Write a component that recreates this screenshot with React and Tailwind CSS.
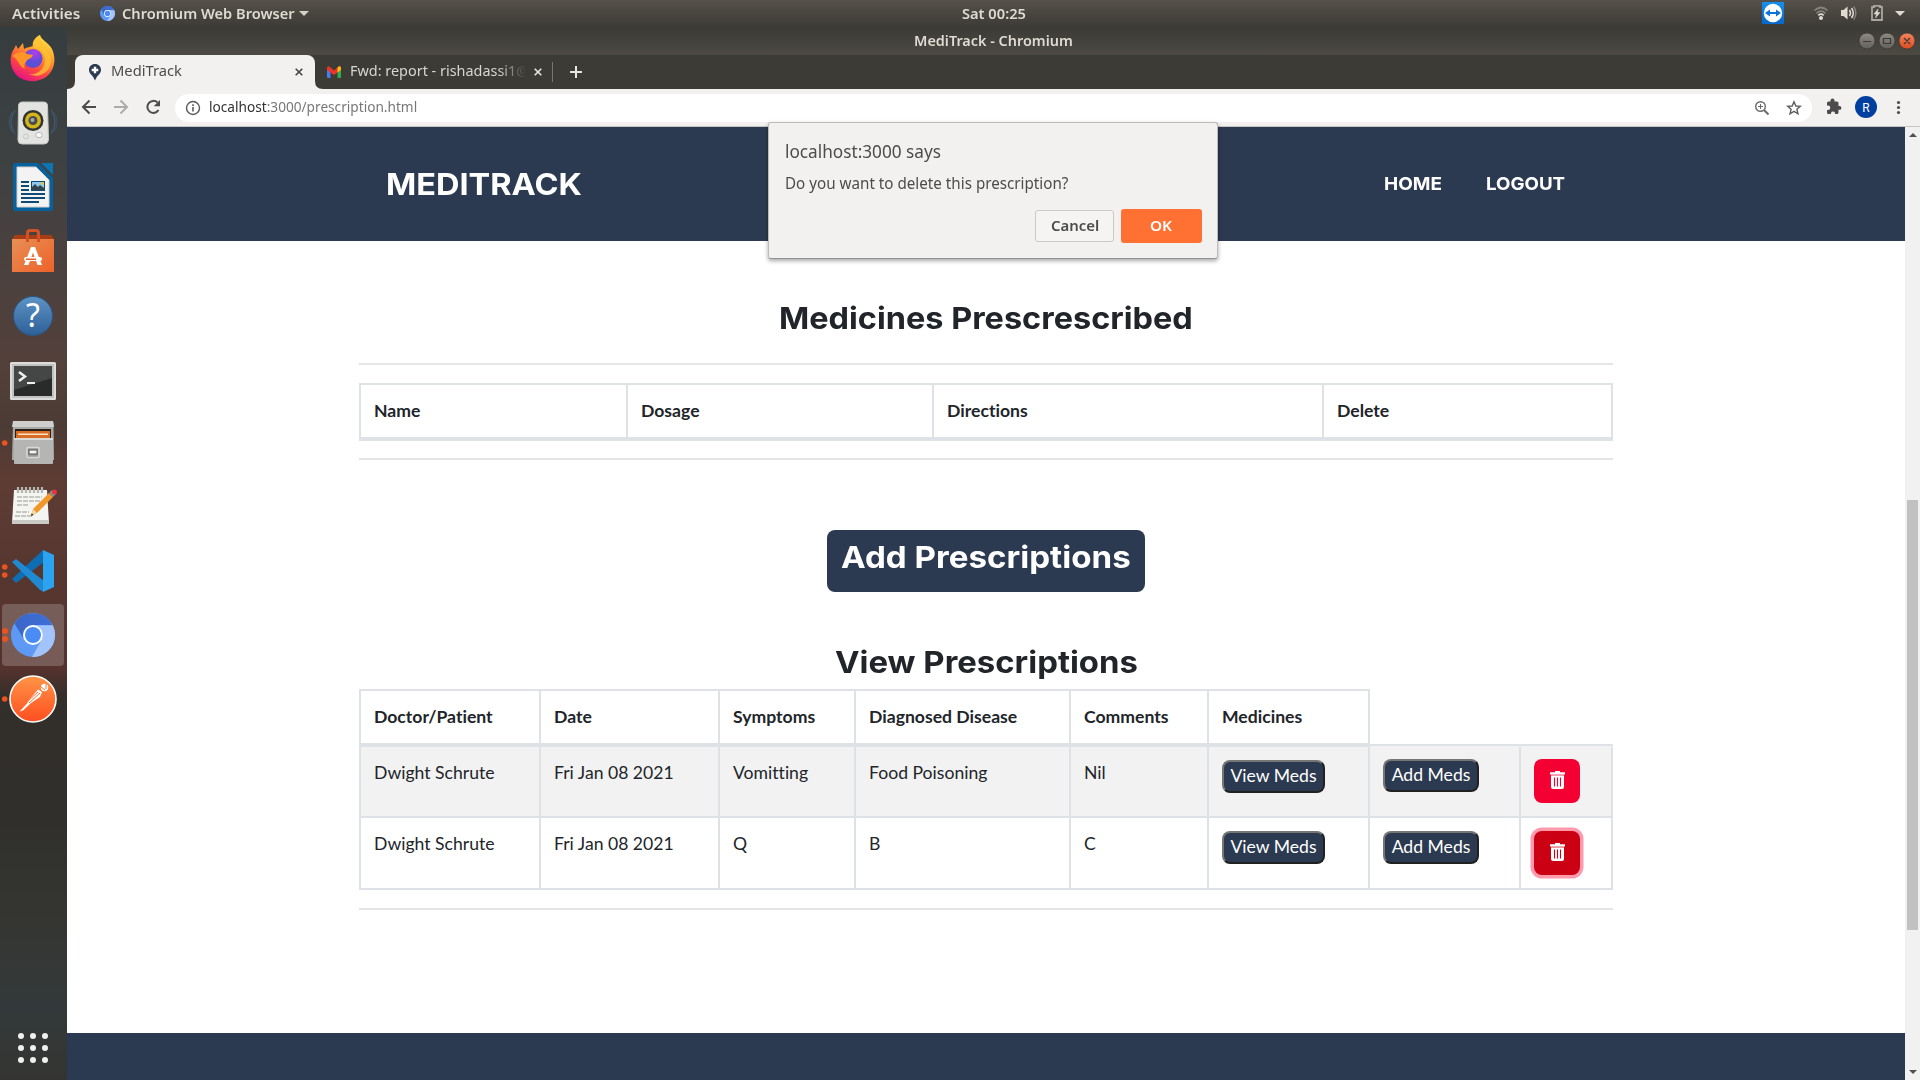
import React, { useLayoutEffect, useRef, useState } from "react";

/* Text set to an exact advance width by horizontal scaling. */
function Fit({ w, className = "", children }) {
  const ref = useRef(null);
  const [k, setK] = useState(1);
  useLayoutEffect(() => {
    const n = ref.current.offsetWidth;
    if (n) setK(w / n);
  }, [w]);
  return (
    <span className={"block shrink-0 whitespace-nowrap text-left " + className} style={{ width: w }}>
      <span ref={ref} className="inline-block origin-left" style={{ transform: `scaleX(${k})` }}>
        {children}
      </span>
    </span>
  );
}

function ChromiumLogo({ className }) {
  return (
    <svg className={className} viewBox="-22 -22 44 44">
      <defs>
        <linearGradient id="crTop" x1="0" x2="1"><stop offset="0" stopColor="#3a66c8" /><stop offset="1" stopColor="#3f6fd6" /></linearGradient>
      </defs>
      <circle r="22" fill="#5f99f6" />
      <path d="M-18.6 -11.5A22 22 0 0 1 19.7 -9.8L0 -9.8A9.8 9.8 0 0 0 -8.6 5Z" fill="url(#crTop)" />
      <path d="M19.7 -9.8A22 22 0 0 1 -1 22L8.6 5A9.8 9.8 0 0 0 0 -9.8Z" fill="#a3c4fb" />
      <circle r="10" fill="#fff" />
      <circle r="8" fill="#4a8bf5" />
    </svg>
  );
}

function Slot({ y, children, dots = [] }) {
  return (
    <svg className="block h-16 w-[67px] shrink-0" viewBox={`0 ${y} 67 64`}>
      {children}
      {dots.map((d) => <circle key={d} cx="4.7" cy={d} r="2.8" fill="#ea5420" />)}
    </svg>
  );
}

function Dock() {
  return (
    <aside className="flex w-[67px] shrink-0 flex-col bg-[linear-gradient(180deg,#363d3f_0%,#3d4142_12%,#4a413f_22%,#53403b_32%,#4c3b35_38%,#5d3c34_43%,#56372f_52%,#55322c_61%,#332f2b_63.5%,#302f2b_75%,#353632_85%,#33393a_93%,#343532_100%)]">
      <Slot y={27}>
        <defs>
          <linearGradient id="ff" x1=".8" y1="0" x2=".3" y2="1"><stop offset="0" stopColor="#fff04a" /><stop offset=".35" stopColor="#ffa42b" /><stop offset=".68" stopColor="#ff4a3f" /><stop offset="1" stopColor="#e5108a" /></linearGradient>
          <radialGradient id="ffg" cx=".6" cy=".2"><stop offset="0" stopColor="#b53bef" /><stop offset="1" stopColor="#5b4fd6" /></radialGradient>
        </defs>
        <path d="M40 35C41 40 48 42 52 49C57 60 54 71 46 77C36 84 20 82 14 72C9 64 10 54 14 49L16 45L18 49L23 43L24 49C27 47 31 47 33 46C32 41 36 37 40 35Z" fill="url(#ff)" />
        <path d="M40 35C34 38 32 43 33 47C43 49 47 56 44 65C42 71 36 75 29 74C40 79 50 72 51 62C52 53 42 49 40 35Z" fill="#ffc432" opacity=".75" />
        <circle cx="33" cy="58.500" r="9.500" fill="url(#ffg)" />
        <path d="M12 56C16 52 24 51 27 54L33 55C32 58 29 59 27 60C26 63 23 64 25 69C18 66 19 59 12 56Z" fill="#ff9526" />
      </Slot>
      <Slot y={91}>
        <g fill="none" stroke="#3f6180" strokeWidth="1.200" opacity=".8"><path d="M15 110Q7 122 15 134M51 110Q59 122 51 134" /><path d="M12 112Q6 122 12 132M54 112Q60 122 54 132" opacity=".6" /></g>
        <path d="M22 102H44Q47 102 47.500 105L48.500 140Q48 144 44 144H22Q18 144 18 140L18.500 105Q19 102 22 102Z" fill="#e3e3e1" stroke="#c6c6c4" />
        <circle cx="33" cy="120.500" r="10.500" fill="#33342f" />
        <circle cx="33" cy="120.500" r="8" fill="#d4b51c" />
        <circle cx="33" cy="120.500" r="4.500" fill="#4a4d4e" />
        <circle cx="32.500" cy="120" r="2" fill="#a3a9ac" />
        <circle cx="26" cy="136.500" r="2.500" fill="none" stroke="#c7c7c7" />
        <rect x="36" y="132.500" width="6" height="5" rx="2" fill="#f8f8f8" stroke="#b9b9b9" />
      </Slot>
      <Slot y={155}>
        <path d="M13 165Q13 163 15 163H38L53 178V209Q53 211 51 211H15Q13 211 13 209Z" fill="#08619c" />
        <path d="M17 167H36L49 180V207H17Z" fill="#f3f3f3" stroke="#cfcfcf" />
        <path d="M41 163H53V175Z" fill="#0a74b5" />
        <g fill="#0e4a73"><rect x="21" y="181" width="8" height="2" /><rect x="21" y="185" width="8" height="2" /><rect x="21" y="189" width="8" height="2" /><rect x="21" y="193" width="24" height="2" /><rect x="21" y="197" width="24" height="2" /><rect x="21" y="201" width="18" height="2" /><rect x="31" y="181" width="14" height="10" /></g>
        <rect x="32" y="182" width="12" height="8" fill="#8cc9ef" />
        <path d="M32 190V187L35 184L38 187L40 185L44 188V190Z" fill="#33454b" />
        <circle cx="42.500" cy="183.500" r="1.500" fill="#f2c230" />
      </Slot>
      <Slot y={219}>
        <defs><linearGradient id="sw" x1="0" y1="0" x2="1" y2="1"><stop offset="0" stopColor="#e88f56" /><stop offset="1" stopColor="#ed6228" /></linearGradient></defs>
        <path d="M12 239L15 235H51L54 239Z" fill="#a83c14" />
        <rect x="12" y="239" width="42" height="33" fill="url(#sw)" />
        <path d="M27.500 242V233Q27.500 230.500 30 230.500H36Q38.500 230.500 38.500 233V242" fill="none" stroke="#d35224" strokeWidth="3" />
        <path d="M31 247H35L42 265H37.500L33 252.500L28.500 265H24Z" fill="#fff" />
        <rect x="24" y="257" width="18" height="4" rx="2" fill="#fff" />
        <rect x="26" y="258.500" width="10" height="1.500" fill="#e4622c" />
      </Slot>
      <Slot y={283}>
        <defs><linearGradient id="hp" x1="0" y1="0" x2="0" y2="1"><stop offset="0" stopColor="#5e93c6" /><stop offset="1" stopColor="#2c6097" /></linearGradient></defs>
        <circle cx="33" cy="316" r="19.500" fill="url(#hp)" stroke="#2b5785" />
        <text x="33" y="327" textAnchor="middle" fontSize="32" fill="#fff" className="font-['Noto_Sans',sans-serif]">?</text>
      </Slot>
      <Slot y={347}>
        <rect x="10" y="362" width="46" height="38" rx="1.500" fill="#dcdcda" />
        <rect x="12" y="364" width="42" height="34" fill="#c1c1bf" />
        <rect x="14" y="366" width="38" height="30" fill="#292a2a" />
        <path d="M14 366H52V378L14 390Z" fill="#454747" />
        <path d="M19 372L25 376.500L19 381" fill="none" stroke="#eee" strokeWidth="2.500" />
        <rect x="27" y="382" width="8" height="2" fill="#eee" />
      </Slot>
      <Slot y={411} dots={[443]}>
        <path d="M13 423Q13 421 15 421H51Q53 421 53.500 423L54 460H12Z" fill="#a9a9a7" />
        <path d="M13 421H53L54 427H12Z" fill="#cfcfcd" />
        <rect x="15" y="429" width="36" height="9" fill="#262019" />
        <rect x="16" y="431" width="34" height="8" fill="#d86c25" /><rect x="18" y="433.500" width="30" height="1.500" fill="#fbe4c5" />
        <rect x="14" y="438" width="39" height="26" rx="1" fill="#b5b5b3" />
        <rect x="14" y="438" width="39" height="2" fill="#d9d9d7" />
        <rect x="27" y="447.500" width="12" height="10" rx="1" fill="#999" stroke="#d9d9d7" strokeWidth="1.500" />
        <rect x="29" y="450" width="8" height="4" fill="#f4f4f4" stroke="#555" />
      </Slot>
      <Slot y={475}>
        <path d="M14 490H47L49 523H12Z" fill="#f4f4f0" /><path d="M12 520H49V524H12Z" fill="#c9c9c5" />
        <path d="M18 487V493M22 487V493M26 487V493M30 487V493M34 487V493M38 487V493M42 487V493" stroke="#b5b5b1" strokeWidth="2.200" />
        <path d="M17 497H42M17 501H40M17 505H29M16 512H29M15 516H32" stroke="#8d8d89" strokeWidth=".9" strokeDasharray="5 1" />
        <path d="M31 516L33 509L49 493L53 497L37 513Z" fill="#f1972b" /><path d="M31 516L33 509L37 513Z" fill="#f0d9a8" /><path d="M31 516L31.700 513.300L33.500 515Z" fill="#222" />
        <path d="M49 493L52 490L56 494L53 497Z" fill="#8d8d8d" /><circle cx="54.500" cy="492" r="2.500" fill="#e8323f" />
      </Slot>
      <Slot y={539} dots={[567, 575]}>
        <path d="M12 579L43 550L44 562L16 583Z" fill="#0f6db3" />
        <path d="M12 562L16 559L44 581V592L40 590Z" fill="#1f8ad2" />
        <path d="M43 550L54 555V587L43 592Z" fill="#2ba3f0" />
      </Slot>
      <div className="relative h-16 w-[67px] shrink-0 pt-px">
        <div className="ml-0.5 flex h-[62px] w-[62px] items-center justify-center rounded bg-white/20"><ChromiumLogo className="h-11 w-11" /></div>
        <div className="absolute left-0.5 top-[25px] h-[5.500px] w-[5.500px] rounded-full bg-[#ea5420]" />
        <div className="absolute left-0.5 top-[33px] h-[5.500px] w-[5.500px] rounded-full bg-[#ea5420]" />
      </div>
      <Slot y={667} dots={[699]}>
        <defs><linearGradient id="pm" x1="0" y1="0" x2="0" y2="1"><stop offset="0" stopColor="#ff9446" /><stop offset="1" stopColor="#ff4e20" /></linearGradient></defs>
        <circle cx="33" cy="699" r="23" fill="url(#pm)" stroke="#fff" strokeWidth="1.600" />
        <path d="M19.500 711.500L27 703.500L29 700L38 689.500L42 692L40 697L31 703L23 710.500Z" fill="#fff" />
        <circle cx="44.500" cy="687.500" r="3.700" fill="#fff" />
        <path d="M27 702L38 692M29 703L40 693M40 686L45 690M46 684L46 689" stroke="#ff7434" />
      </Slot>
      <svg className="mt-auto mb-2 block h-12 w-[67px] shrink-0" viewBox="0 1024 67 48">
        {[1036, 1048, 1060].map((y) => [21, 33, 45].map((x) => <circle key={x + "-" + y} cx={x} cy={y} r="3" fill="#f0f0ee" />))}
      </svg>
    </aside>
  );
}

function TopBar() {
  return (
    <div className="flex h-[27px] w-full items-center bg-[linear-gradient(#55514a,#3d3b36)] font-['Noto_Sans',sans-serif] text-[13.500px] font-semibold leading-[26px] text-[#dfdbd2]">
      <Fit w={68} className="ml-3">Activities</Fit>
      <ChromiumLogo className="ml-[20px] h-[15px] w-[15px] shrink-0" />
      <Fit w={173} className="ml-[7px]">Chromium Web Browser</Fit>
      <span className="ml-1 border-x-[5px] border-t-[5px] border-x-transparent border-t-[#d5d1c8]" />
      <Fit w={64} className="ml-[653px]">Sat 00:25</Fit>
      <svg className="ml-auto h-[27px] w-[168px] shrink-0" viewBox="1752 0 168 27">
        <defs><linearGradient id="tv" x1="0" y1="0" x2="0" y2="1"><stop offset="0" stopColor="#168ff0" /><stop offset="1" stopColor="#0868cc" /></linearGradient></defs>
        <rect x="1762" y="2" width="22" height="22" fill="url(#tv)" />
        <circle cx="1773" cy="13" r="9.200" fill="#fff" />
        <path d="M1765 13L1770 9.500V12H1776V9.500L1781 13L1776 16.500V14H1770V16.500Z" fill="#0b74d6" />
        <g fill="none" strokeWidth="1.700"><path d="M1814.500 10.500Q1821 4.500 1827.500 10.500" stroke="#86837c" /><path d="M1816.500 13.300Q1821 9 1825.500 13.300" stroke="#86837c" /><path d="M1818.300 15.300Q1821 13 1823.700 15.300" stroke="#dfdbd2" /></g>
        <circle cx="1821" cy="18" r="2" fill="#dfdbd2" />
        <path d="M1841 10H1843.500L1847.500 6.500V19.500L1843.500 16H1841Z" fill="#dfdbd2" />
        <g fill="none" strokeWidth="1.500"><path d="M1849.500 10Q1851.500 13 1849.500 16" stroke="#dfdbd2" /><path d="M1851.500 8Q1855 13 1851.500 18" stroke="#dfdbd2" /><path d="M1853.700 6.500Q1858 13 1853.700 19.500" stroke="#86837c" /></g>
        <path d="M1874 7V5.800H1880V7H1882V20H1872V7Z" fill="none" stroke="#aaa69e" strokeWidth="1.800" />
        <path d="M1878 9L1874 14H1876.500L1875.500 18L1880 12.500H1877.500Z" fill="#dfdbd2" stroke="#dfdbd2" strokeWidth=".5" />
        <path d="M1895 11H1905L1900 16Z" fill="#dfdbd2" />
      </svg>
    </div>
  );
}

function TitleBar() {
  return (
    <div className="flex h-7 items-center bg-[linear-gradient(#3b3a35,#4d4a44)] font-['Noto_Sans',sans-serif] text-[13.500px] font-semibold leading-7 text-[#dfdbd2]">
      <Fit w={159} className="ml-[847px]">MediTrack - Chromium</Fit>
      <svg className="ml-auto mr-[3px] h-7 w-[60px]" viewBox="1857 27 60 28">
        <defs>
          <linearGradient id="wb" x1="0" y1="0" x2="0" y2="1"><stop offset="0" stopColor="#8d8a83" /><stop offset="1" stopColor="#62605a" /></linearGradient>
          <linearGradient id="wc" x1="0" y1="0" x2="0" y2="1"><stop offset="0" stopColor="#f28561" /><stop offset="1" stopColor="#de4b1c" /></linearGradient>
        </defs>
        <g stroke="#34332f" strokeWidth=".7"><circle cx="1867" cy="41" r="8" fill="url(#wb)" /><circle cx="1887" cy="41" r="8" fill="url(#wb)" /><circle cx="1907" cy="41" r="8" fill="url(#wc)" /></g>
        <path d="M1863 41.500H1871M1883.500 38.500H1890.500V43.500H1883.500ZM1904 38L1910 44M1910 38L1904 44" fill="none" stroke="#3a3935" strokeWidth="1.200" />
      </svg>
    </div>
  );
}

function CloseX({ className, color }) {
  return <svg className={"h-2 w-2 shrink-0 " + className} viewBox="0 0 8 8"><path d="M.7 .7L7.300 7.300M7.300 .7L.7 7.300" stroke={color} strokeWidth="1.600" /></svg>;
}

function TabStrip() {
  return (
    <div className="flex h-[34px] items-stretch bg-[#3c3b36] font-['Noto_Sans',sans-serif] text-[14.500px]">
      <svg className="w-2 shrink-0 self-end" height="8" viewBox="0 0 8 8"><path d="M8 0V8H0Q8 8 8 0Z" fill="#f2f1f0" /></svg>
      <div className="flex w-[240px] shrink-0 items-center rounded-t-lg bg-[#f2f1f0] text-[#4c4c4c]">
        <svg className="ml-[13px] h-[18px] w-[14px]" viewBox="0 0 14 18"><path d="M7 1C10.500 1 13 3.500 13 7C13 11 9 12 7 17.500C5 12 1 11 1 7C1 3.500 3.500 1 7 1Z" fill="#2b3a50" /><path d="M7 3.700V10.300M3.700 7H10.300" stroke="#fff" strokeWidth="2.400" /></svg>
        <Fit w={71} className="mb-0.5 ml-[9px]">MediTrack</Fit>
        <CloseX className="ml-auto mr-[12px]" color="#444" />
      </div>
      <svg className="w-2 shrink-0 self-end" height="8" viewBox="0 0 8 8"><path d="M0 0V8H8Q0 8 0 0Z" fill="#f2f1f0" /></svg>
      <div className="flex w-[229px] shrink-0 items-center text-[#d8d6d0]">
        <svg className="ml-[4px] h-3 w-[14px] shrink-0" viewBox="0 0 14 12"><path d="M0 1.500L3.500 4.500V12H1Q0 12 0 11Z" fill="#4a7df0" /><path d="M14 1.500L10.500 4.500V12H13Q14 12 14 11Z" fill="#2fae4e" /><path d="M0 2Q0 0 2 .3L7 4.500L12 .3Q14 0 14 2V4L7 9L0 4Z" fill="#e9352b" /><path d="M10.500 1.600L12 .3Q14 0 14 2V4L10.500 6.500Z" fill="#f7bb14" /></svg>
        <div className="mb-0.5 ml-[9px] w-[176px] overflow-hidden [mask-image:linear-gradient(90deg,#000_84%,transparent)]"><Fit w={179}>Fwd: report - rishadassi1@</Fit></div>
        <CloseX className="ml-[8px]" color="#e8e6e0" />
      </div>
      <div className="my-[7px] w-px bg-[#777570]" />
      <svg className="ml-[17px] w-3 self-center" viewBox="0 0 12 12"><path d="M6 0V12M0 6H12" stroke="#e8e6e0" strokeWidth="2" /></svg>
    </div>
  );
}

function Toolbar() {
  return (
    <div className="flex h-[38px] items-center border-b border-[#c5c4c3] bg-[#f2f1f0] font-['Noto_Sans',sans-serif]">
      <svg className="h-[37px] w-[108px] shrink-0" viewBox="67 89 108 37" fill="none" strokeWidth="2">
        <path d="M96 107H83M89.500 100.500L83 107L89.500 113.500" stroke="#4c4c4c" />
        <path d="M114 107H127M120.500 100.500L127 107L120.500 113.500" stroke="#acabaa" />
        <path d="M158.500 110A6 6 0 1 1 157.500 102.500" stroke="#4c4c4c" /><path d="M160 100V106.300H153.700Z" fill="#4c4c4c" />
      </svg>
      <div className="flex h-7 w-[1637px] items-center rounded-full bg-white">
        <svg className="ml-[10px] h-4 w-4 shrink-0" viewBox="0 0 16 16" fill="none" stroke="#5a5a5a" strokeWidth="1.400"><circle cx="8" cy="8" r="6.500" /><path d="M8 7V11.500M8 4.300V6" strokeWidth="1.600" /></svg>
        <Fit w={208} className="mb-0.5 ml-[8px] text-[14.500px] text-[#777]"><span className="text-[#333]">localhost</span>:3000/prescription.html</Fit>
        <svg className="ml-auto mr-[42px] h-4 w-4 shrink-0" viewBox="0 0 16 16" fill="none" stroke="#6a6a6a" strokeWidth="1.400"><circle cx="6.500" cy="6.500" r="4.800" /><path d="M10 10L14.500 14.500" strokeWidth="2" /><path d="M6.500 4V9M4 6.500H9" strokeWidth="1.100" /></svg>
        <svg className="-ml-[26px] mr-[10px] h-4 w-4 shrink-0" viewBox="0 0 16 16" fill="none" stroke="#5f5f5f" strokeWidth="1.400"><path d="M8 1.800L9.800 6L14.300 6.400L10.900 9.300L12 13.800L8 11.300L4 13.800L5.100 9.300L1.700 6.400L6.200 6Z" /></svg>
      </div>
      <svg className="h-[37px] w-[108px] shrink-0" viewBox="1812 89 108 37">
        <path d="M1839.500 106H1838.500V103Q1838.500 101.500 1837 101.500H1834.500V100.500A2 2 0 0 0 1830.500 100.500V101.500H1828.500Q1827 101.500 1827 103V105.500H1828A2.100 2.100 0 0 1 1828 110H1827V112.500Q1827 114 1828.500 114H1831V113A2.100 2.100 0 0 1 1835 113V114H1837Q1838.500 114 1838.500 112.500V109.800H1839.500A1.900 1.900 0 0 0 1839.500 106Z" fill="#4c4c4c" />
        <circle cx="1866" cy="107" r="11" fill="#003e9f" />
        <text x="1866" y="111.500" textAnchor="middle" fontSize="12" fill="#fff" className="font-['Roboto',sans-serif]">R</text>
        <g fill="#4c4c4c"><circle cx="1898.500" cy="102.500" r="1.600" /><circle cx="1898.500" cy="107.500" r="1.600" /><circle cx="1898.500" cy="112.500" r="1.600" /></g>
      </svg>
    </div>
  );
}

function Dialog() {
  return (
    <div className="absolute left-[701px] top-[-5px] flex h-[137px] w-[450px] flex-col rounded-[3px] border border-[#bdbcbb] border-b-[#949392] bg-[#f2f1f0] pl-4 pr-[15px] font-['Noto_Sans',sans-serif] text-[#4c4c4c] shadow-[0_2px_4px_rgba(0,0,0,0.35)]">
      <Fit w={156} className="mt-[16px] h-6 text-[18.200px] leading-6">localhost:3000 says</Fit>
      <Fit w={283} className="mt-[8px] h-6 text-[16px] leading-6">Do you want to delete this prescription?</Fit>
      <div className="mt-[14px] flex items-center justify-end gap-[7px] text-[14px] font-semibold">
        <div className="flex h-8 w-[79px] items-center justify-center rounded-[3px] border border-[#cbcac9] bg-[#f5f4f3] pb-0.5"><Fit w={48}>Cancel</Fit></div>
        <div className="flex h-[34px] w-[81px] items-center justify-center rounded-[3px] bg-[#ff7033] pb-0.5 pr-0.5 text-white"><Fit w={22}>OK</Fit></div>
      </div>
    </div>
  );
}

function MedButton({ className = "", children }) {
  return (
    <button className={"flex h-[33px] items-center justify-center whitespace-nowrap rounded-[8px] border-2 border-b-[#212121] border-l-[#767676] border-r-[#212121] border-t-[#767676] bg-[#2b3a50] pb-0.5 leading-6 text-white " + className}>
      {children}
    </button>
  );
}

function TrashButton({ active }) {
  return (
    <button className={"flex h-11 w-[46px] items-center justify-center rounded-[8px] " + (active ? "bg-[#cb0013] shadow-[0_0_0_3.500px_#ff9aac]" : "bg-[#f50032]")}>
      <svg className="-mt-0.5 ml-px h-[18px] w-[15px]" viewBox="0 0 15 18">
        <path d="M5 0H10V1.200H15V3.500H0V1.200H5Z" fill="#fff" />
        <path d="M1 3.500H14V5H1Z" fill="#fff" opacity=".6" />
        <path d="M1 5H14V16Q14 18 12 18H3Q1 18 1 16Z" fill="#fff" />
        <path d="M4.500 6.500V15.500M7.500 6.500V15.500M10.500 6.500V15.500" stroke={active ? "#cb0013" : "#f50032"} strokeWidth="1.100" />
      </svg>
    </button>
  );
}

const headCell = "h-[58px] shrink-0 border-b-4 border-l-2 border-t-2 border-[#dee2e6] pl-[13px] pt-[13px] font-bold ";
const cell = "shrink-0 border-l-2 border-[#dee2e6] pl-[13px] ";

function MedicineTable() {
  return (
    <div className="flex h-[58px]">
      <div className={headCell + "w-[267px]"}>Name</div>
      <div className={headCell + "w-[306px]"}>Dosage</div>
      <div className={headCell + "w-[390px]"}>Directions</div>
      <div className={headCell + "w-[291px] border-r-2"}>Delete</div>
    </div>
  );
}

function Row({ data, first }) {
  return (
    <div className={"flex border-b-2 border-[#dee2e6] " + (first ? "h-[71px] bg-[#f2f2f2]" : "h-[72px]")}>
      <div className={cell + "w-[180px] pt-[13px]"}>{data[0]}</div>
      <div className={cell + "w-[179px] pt-[13px]"}>{data[1]}</div>
      <div className={cell + "w-[136px] pt-[13px]"}>{data[2]}</div>
      <div className={cell + "w-[215px] pt-[13px]"}>{data[3]}</div>
      <div className={cell + "w-[138px] pt-[13px]"}>{data[4]}</div>
      <div className={cell + "w-[161px] pt-[13px]"}><MedButton className="w-[103px]">View Meds</MedButton></div>
      <div className={cell + "w-[151px] " + (first ? "pt-3" : "pt-[13px]")}><MedButton className="w-[96px]">Add Meds</MedButton></div>
      <div className={cell + "w-[94px] border-r-2 " + (first ? "pt-3" : "pt-[13px]")}><TrashButton active={!first} /></div>
    </div>
  );
}

function PrescriptionTable() {
  return (
    <div className="flex flex-col">
      <div className="flex h-[58px]">
        <div className={headCell + "w-[180px]"}>Doctor/Patient</div>
        <div className={headCell + "w-[179px]"}>Date</div>
        <div className={headCell + "w-[136px]"}>Symptoms</div>
        <div className={headCell + "w-[215px]"}>Diagnosed Disease</div>
        <div className={headCell + "w-[138px]"}>Comments</div>
        <div className={headCell + "w-[163px] border-r-2"}>Medicines</div>
        <div className="flex w-[243px] flex-col justify-end"><div className="h-[3px] border-t-2 border-[#dee2e6] bg-[#f2f2f2]" /></div>
      </div>
      <Row first data={["Dwight Schrute", "Fri Jan 08 2021", "Vomitting", "Food Poisoning", "Nil"]} />
      <Row data={["Dwight Schrute", "Fri Jan 08 2021", "Q", "B", "C"]} />
    </div>
  );
}

const title = "font-['Inter',sans-serif] font-bold text-[30.500px] leading-10 ";

function Page() {
  return (
    <div className="flex min-w-0 flex-1 flex-col bg-white">
      <header className="flex h-[114px] shrink-0 items-center bg-[#2b3a50] font-['Inter',sans-serif] font-bold text-white">
        <Fit w={196} className="ml-[319px] text-[30.500px]">MEDITRACK</Fit>
        <Fit w={58} className="mb-0.5 ml-[802px] text-[18px]">HOME</Fit>
        <Fit w={79} className="mb-0.5 ml-[44px] text-[18px]">LOGOUT</Fit>
      </header>
      <main className="mx-auto flex w-[1254px] flex-1 flex-col font-['Lato',sans-serif] text-[17.600px] leading-[26px] text-[#212529] [font-variant-ligatures:none]">
        <Fit w={414} className={"mt-[57px] self-center " + title}>Medicines Prescrescribed</Fit>
        <div className="mb-[18px] mt-[25px] h-0.5 shrink-0 bg-[#e5e5e5]" />
        <MedicineTable />
        <div className="mt-[17px] h-0.5 shrink-0 bg-[#e5e5e5]" />
        <button className="mt-[70px] flex h-[62px] w-[318px] shrink-0 justify-center self-center rounded-[8px] bg-[#2b3a50] pt-[7px] text-white">
          <Fit w={290} className={title}>Add Prescriptions</Fit>
        </button>
        <Fit w={303} className={"mb-[7px] mt-[50px] self-center " + title}>View Prescriptions</Fit>
        <PrescriptionTable />
        <div className="mt-[18px] h-0.5 shrink-0 bg-[#e5e5e5]" />
      </main>
      <footer className="h-[47px] shrink-0 bg-[#2b3a50]" />
    </div>
  );
}

export default function App() {
  return (
    <div className="flex h-[1080px] w-[1920px] flex-col overflow-hidden">
      <TopBar />
      <div className="flex min-h-0 flex-1">
        <Dock />
        <div className="flex min-w-0 flex-1 flex-col">
          <TitleBar />
          <TabStrip />
          <Toolbar />
          <div className="relative flex min-h-0 flex-1">
            <Page />
            <div className="flex w-[15px] shrink-0 flex-col items-center bg-[#f1f1f1]">
              <span className="mt-1.5 border-x-[4px] border-b-[4px] border-x-transparent border-b-[#505050]" />
              <div className="mt-[363px] h-[430px] w-[11px] bg-[#c1c1c1]" />
              <span className="mb-1.5 mt-auto border-x-[4px] border-t-[4px] border-x-transparent border-t-[#505050]" />
            </div>
            <Dialog />
          </div>
        </div>
      </div>
    </div>
  );
}
